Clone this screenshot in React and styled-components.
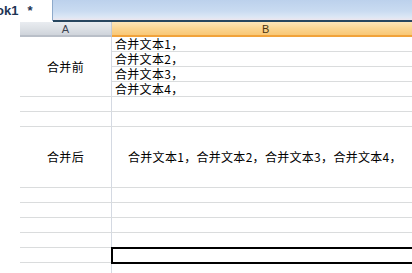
import styled, { createGlobalStyle } from 'styled-components';

const GlobalStyle = createGlobalStyle`
  html, body {
    margin: 0;
    padding: 0;
    background: #ffffff;
    overflow: hidden;
  }
  #root {
    width: 412px;
    height: 273px;
    overflow: hidden;
  }
`;

const Window = styled.div`
  width: 412px;
  height: 273px;
  overflow: hidden;
  background: #ffffff;
  display: flex;
  flex-direction: column;
`;

const TabBar = styled.div`
  display: flex;
  height: 22px;
  flex-shrink: 0;
`;

const Tab = styled.div`
  width: 52px;
  height: 21px;
  background: #ffffff;
  border-right: 1px solid #8eaacb;
  display: flex;
  align-items: center;
  overflow: hidden;
  font-family: 'Liberation Sans', Arial, sans-serif;
  font-size: 13px;
  font-weight: bold;
  color: #1d3453;
  white-space: nowrap;

  span {
    margin-left: -4px;
  }

  em {
    font-style: normal;
    margin-left: 9px;
  }
`;

const TabFill = styled.div`
  flex: 1;
  height: 20px;
  background: linear-gradient(180deg, #bcd1ec 0%, #c9dbf1 55%, #dce7f5 85%, #ece6ee 100%);
  border-bottom: 2px solid #27465f;
`;

const Sheet = styled.div`
  display: grid;
  width: 412px;
  overflow: hidden;
  grid-template-columns: 20px 92px 340px;
  grid-template-rows: 15px repeat(6, 15px) 61px repeat(6, 15px);
  font-family: 'Noto Sans CJK SC', 'Liberation Serif', sans-serif;
  font-size: 12px;
  color: #000;
`;

const Corner = styled.div`
  grid-column: 1;
  background: #ffffff;
`;

const ColHeader = styled.div`
  display: flex;
  align-items: center;
  justify-content: ${p => (p.$active ? 'flex-start' : 'center')};
  padding-left: ${p => (p.$active ? '150px' : '0')};
  font-family: 'Liberation Sans', Arial, sans-serif;
  font-size: 11px;
  box-sizing: border-box;
  color: ${p => (p.$active ? '#4a3510' : '#3d4450')};
  background: ${p =>
    p.$active
      ? 'linear-gradient(180deg, #fde6b9 0%, #fbd591 50%, #f8c877 100%)'
      : 'linear-gradient(180deg, #e9ecf0 0%, #dde1e6 50%, #cfd4db 100%)'};
  border-bottom: 2px solid ${p => (p.$active ? '#f1a33b' : '#b9bfc8')};
  border-right: 1px solid ${p => (p.$active ? 'transparent' : '#c4cad3')};
`;

const RowGutter = styled.div`
  grid-column: 1;
  grid-row: ${p => p.$row};
  background: #ffffff;
`;

const Cell = styled.div`
  box-sizing: border-box;
  grid-column: ${p => p.$col};
  grid-row: ${p => (p.$span ? `${p.$row} / span ${p.$span}` : p.$row)};
  border-bottom: 1px solid #dadcdd;
  border-right: 1px solid ${p => (p.$col === 3 ? 'transparent' : '#d4d9e2')};
  display: flex;
  align-items: center;
  justify-content: ${p => (p.$center ? 'center' : 'flex-start')};
  padding-left: ${p => p.$pad ?? 3}px;
  line-height: 12px;
  letter-spacing: 0.3px;
  white-space: nowrap;
  ${p => p.$selected && `
    outline: 2px solid #000;
    outline-offset: -1px;
    border-color: transparent;
    position: relative;
    z-index: 1;
  `}
`;

const rowsB = ['合并文本1，', '合并文本2，', '合并文本3，', '合并文本4，'];

export default function App() {
  const emptyRows = [6, 7, 9, 10, 11, 12, 13, 14];

  return (
    <Window>
      <GlobalStyle />
      <TabBar>
        <Tab>
          <span>ok1<em>*</em></span>
        </Tab>
        <TabFill />
      </TabBar>
      <Sheet>
        <Corner />
        <ColHeader>A</ColHeader>
        <ColHeader $active>B</ColHeader>

        {Array.from({ length: 13 }, (_, i) => (
          <RowGutter key={i} $row={i + 2} />
        ))}

        <Cell $col={2} $row={2} $span={4} $center $pad={0}>合并前</Cell>
        {rowsB.map((t, i) => (
          <Cell key={t} $col={3} $row={i + 2}>{t}</Cell>
        ))}

        {emptyRows.map(r => (
          <Cell key={`a${r}`} $col={2} $row={r} />
        ))}
        {emptyRows.filter(r => r !== 13).map(r => (
          <Cell key={`b${r}`} $col={3} $row={r} />
        ))}

        <Cell $col={2} $row={8} $center $pad={0}>合并后</Cell>
        <Cell $col={3} $row={8} $pad={16}>合并文本1，合并文本2，合并文本3，合并文本4，</Cell>

        <Cell $col={3} $row={13} $selected />
      </Sheet>
    </Window>
  );
}
